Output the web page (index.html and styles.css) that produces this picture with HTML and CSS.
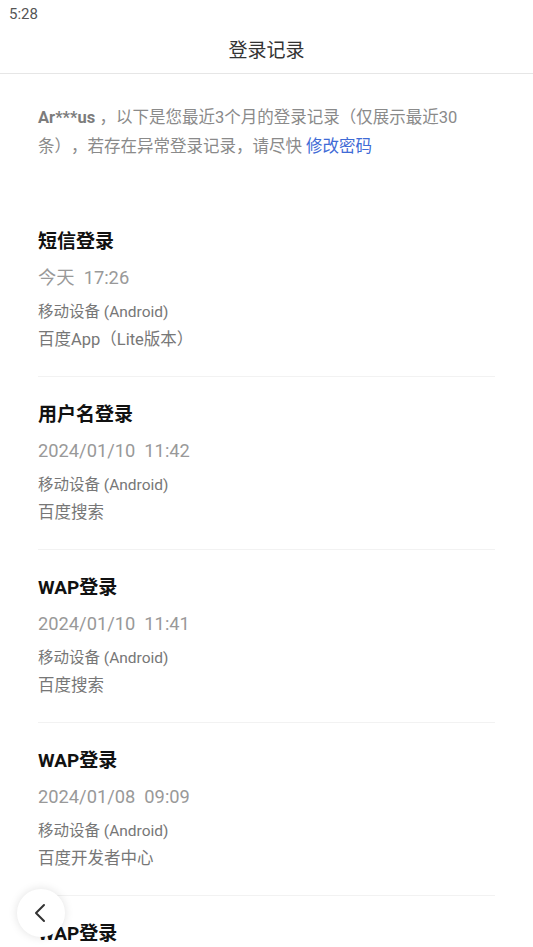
FILE: index.html
```html
<!DOCTYPE html>
<html lang="zh-CN">
<head>
    <meta charset="UTF-8">
    <meta name="viewport" content="width=device-width, initial-scale=1.0">
    <title>登录记录</title>
    <link rel="stylesheet" href="styles.css">
</head>
<body>

    <!-- Status bar -->
    <div class="status-bar">5:28</div>

    <!-- Header -->
    <div class="header">登录记录</div>

    <!-- Intro -->
    <p class="intro">
        <strong>Ar***us</strong> ，以下是您最近3个月的登录记录（仅展示最近30条），若存在异常登录记录，请尽快 <a href="#" class="intro-link">修改密码</a>
    </p>

    <!-- Records -->
    <div class="record-list">
        <div class="record">
            <div class="record-title">短信登录</div>
            <div class="record-time">今天&nbsp; 17:26</div>
            <div class="record-device">移动设备 (Android)</div>
            <div class="record-app">百度App（Lite版本）</div>
        </div>
        <div class="record">
            <div class="record-title">用户名登录</div>
            <div class="record-time">2024/01/10&nbsp; 11:42</div>
            <div class="record-device">移动设备 (Android)</div>
            <div class="record-app">百度搜索</div>
        </div>
        <div class="record">
            <div class="record-title">WAP登录</div>
            <div class="record-time">2024/01/10&nbsp; 11:41</div>
            <div class="record-device">移动设备 (Android)</div>
            <div class="record-app">百度搜索</div>
        </div>
        <div class="record">
            <div class="record-title">WAP登录</div>
            <div class="record-time">2024/01/08&nbsp; 09:09</div>
            <div class="record-device">移动设备 (Android)</div>
            <div class="record-app">百度开发者中心</div>
        </div>
        <div class="record">
            <div class="record-title">WAP登录</div>
            <div class="record-time">2024/01/08&nbsp; 09:05</div>
            <div class="record-device">移动设备 (Android)</div>
            <div class="record-app">百度开发者中心</div>
        </div>
    </div>

    <!-- Floating back button -->
    <button class="back-button" aria-label="返回">
        <svg width="22" height="22" viewBox="0 0 22 22">
            <path d="M14 3 L6 11 L14 19" fill="none" stroke="#333" stroke-width="2" stroke-linecap="round" stroke-linejoin="round"/>
        </svg>
    </button>

</body>
</html>
```

FILE: styles.css
```css
body {
    margin: 0;
    background-color: white;
    font-family: Roboto, "Noto Sans CJK SC", sans-serif;
    color: #333;
    text-spacing-trim: space-all;
}

.status-bar {
    height: 28px;
    line-height: 28px;
    padding-left: 9px;
    font-size: 15px;
    color: #555;
}

.header {
    height: 45px;
    line-height: 45px;
    text-align: center;
    font-size: 19px;
    color: #333;
    border-bottom: 1px solid #e6e6e6;
}

.intro {
    margin: 29px 0 0;
    padding: 0 38px;
    max-width: 430px;
    font-size: 16.5px;
    line-height: 29px;
    color: #8a8a8a;
}

.intro strong {
    color: #7c7c7c;
}

.intro-link {
    color: #3f6bd6;
    text-decoration: none;
}

.record-list {
    margin-top: 43px;
    padding: 0 38px;
}

.record {
    width: 457px;
    padding: 25px 0 24px;
    border-bottom: 1px solid #f2f2f2;
}

.record-title {
    font-size: 19px;
    line-height: 26px;
    font-weight: bold;
    color: #111;
}

.record-time {
    margin-top: 10px;
    font-size: 18.3px;
    line-height: 26px;
    color: #999;
}

.record-device {
    margin-top: 10px;
    font-size: 15.5px;
    line-height: 22px;
    color: #777;
}

.record-app {
    margin-top: 5px;
    font-size: 16.5px;
    line-height: 24px;
    color: #777;
}

.back-button {
    position: fixed;
    left: 17px;
    top: 889px;
    width: 48px;
    height: 48px;
    border: none;
    border-radius: 50%;
    background-color: white;
    box-shadow: 0px 0px 10px rgba(0, 0, 0, 0.12);
    display: flex;
    align-items: center;
    justify-content: center;
    padding: 0;
    cursor: pointer;
}
```
